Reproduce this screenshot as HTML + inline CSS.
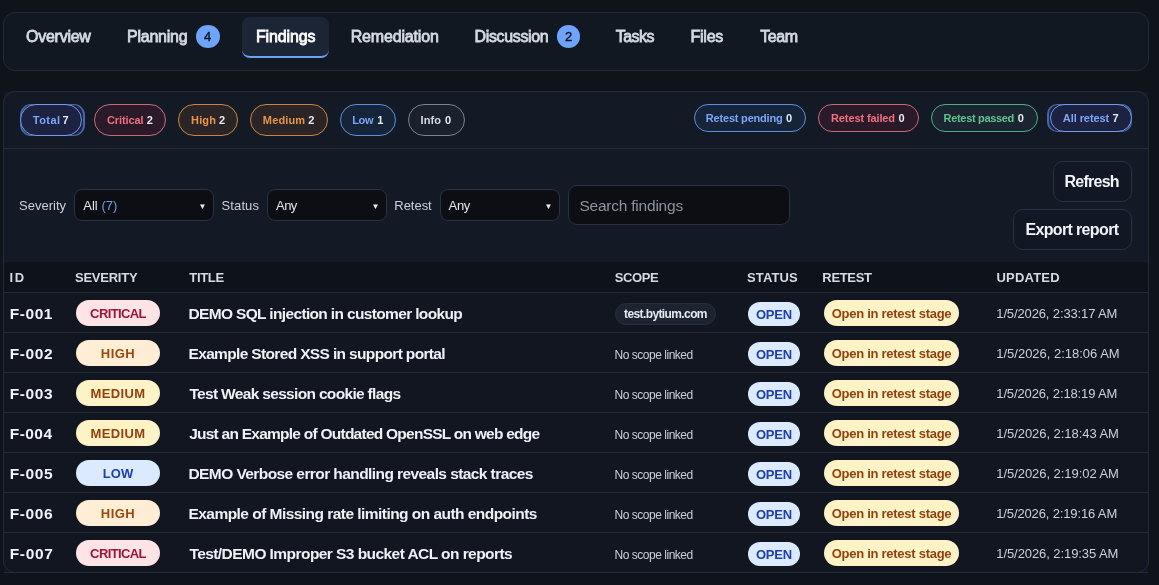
<!DOCTYPE html>
<html lang="en">
<head>
<meta charset="utf-8">
<title>Findings</title>
<style>
*{box-sizing:border-box;margin:0;padding:0}
html,body{width:1159px;height:585px;overflow:hidden}
body{background:#0f141b;color:#e6ebf2;font-family:"Liberation Sans",sans-serif;position:relative}
.tabs,.panel{will-change:transform}
.tabs{position:absolute;left:3px;top:12px;width:1146px;height:59px;background:#111822;border:1px solid #222b38;border-radius:12px}
.tab{position:absolute;top:4px;height:41px;line-height:39px;font-size:16px;font-weight:400;color:#d3d9e2;white-space:nowrap;-webkit-text-stroke:.8px #d3d9e2}
.tabbg{position:absolute;left:238px;top:4px;width:87px;height:41px;background:#1c2536;border-bottom:2px solid #6ea0f5;border-radius:8px}
.tab.active{color:#fff;-webkit-text-stroke:.8px #fff}
.badge{position:absolute;top:12px;width:23px;height:22.6px;border-radius:50%;background:#6ea4fb;color:#0b1220;font-size:13px;font-weight:400;-webkit-text-stroke:.4px #0b1220;text-align:center;line-height:23px}
.panel{position:absolute;left:3px;top:91px;width:1146px;height:482px;background:#141a25;border:1px solid #222b38;border-radius:12px}
.panel::after{content:'';position:absolute;left:-1px;top:-1px;right:-1px;bottom:-1px;border:1px solid #222b38;border-radius:12px;z-index:5}
.chips{position:absolute;left:0;top:0;width:1144px;height:57px;border-bottom:1px solid #222b38;background:#141a25}
.chip{position:absolute;top:12px;height:32px;border-radius:16px;border:1px solid;font-size:11px;font-weight:700;white-space:nowrap;line-height:30px}
.chip.r{height:28px;line-height:26px;border-radius:14px}
.chip span{position:absolute;top:0}
.chip b{position:absolute;top:0;color:#e6ebf2;font-weight:700}
.c-blue{border-color:#5b8fd9;background:#16243a;color:#7aa7f7}
.c-sel{border-color:#6f9be8;background:#1d2242;color:#7aa7f7}
.ring{position:absolute;top:12px;border:solid #4467a6;border-width:1px 2px;background:#1d2242}
.c-red{border-color:#c96a78;background:#2a1a29;color:#f0707f}
.c-org{border-color:#c9853d;background:#2b2426;color:#e8954a}
.c-grn{border-color:#4caf7d;background:#1b2431;color:#5fc58f}
.c-gry{border-color:#7b8390;background:#1a202c;color:#d5dae3}
.filters{position:absolute;left:0;top:57px;width:1144px;height:113px}
.lbl{position:absolute;top:49px;font-size:13px;color:#c9d1dc;line-height:16px;white-space:nowrap}
.sel{position:absolute;top:40px;height:32px;border:1px solid #273242;border-radius:8px;background:#0c0e13;font-size:13px;color:#dfe4ec;line-height:32px;white-space:nowrap}
.sel span{position:absolute;left:8px;top:0}
.sel i{font-style:normal;color:#6f9be8}
.sel .arr{position:absolute;left:auto;right:6.5px;top:1px;font-size:8px;color:#e6ebf2;letter-spacing:0}
.search{position:absolute;left:564px;top:36px;width:222px;height:40px;border:1px solid #273242;border-radius:9px;background:#0c0e13;font-size:15.5px;color:#8b93a1;line-height:40px;white-space:nowrap}
.search span{position:absolute;left:11px;top:0}
.btn{position:absolute;height:40.5px;border:1px solid #283241;border-radius:10px;background:#121823;font-size:16px;font-weight:700;color:#f1f4f8;line-height:40px;white-space:nowrap}
.btn span{position:absolute;left:11px;top:0}
.thead{position:absolute;left:0;top:170px;width:1144px;height:31px;background:#0e121a;border-bottom:1px solid #242d3a}
.th{position:absolute;top:0;line-height:32px;font-size:13px;font-weight:700;color:#d5dae3;white-space:nowrap}
.row{position:absolute;left:0;width:1144px;height:40px;background:#111621;border-bottom:1px solid #242d3a}
.row>*{position:absolute;white-space:nowrap}
.id{left:6px;top:0;line-height:42px;font-size:15.5px;font-weight:700;color:#f1f4f8}
.ti{left:185px;top:0;line-height:42px;font-size:15.5px;font-weight:700;color:#eef1f6}
.up{left:993px;top:0;line-height:42px;font-size:13px;color:#c9d1dc}
.sev{left:72px;top:7px;width:84px;height:26px;border-radius:13px;font-size:13px;font-weight:700;text-align:center;line-height:28px}
.s-c{background:#ffe4e6;color:#9f1239}
.s-h{background:#ffedd5;color:#9a4a10}
.s-m{background:#fef3c7;color:#92400e}
.s-l{background:#dbeafe;color:#1e40af}
.scope{left:611px;top:10px;width:101px;height:22px;border-radius:11px;background:#1c2431;border:1px solid #262f3d;font-size:12px;font-weight:700;color:#e6ebf2;line-height:20px;text-align:center}
.nos{left:611px;top:0;line-height:45px;font-size:12px;color:#c9d1dc}
.open{left:744px;top:9px;width:52px;height:24px;border-radius:12px;background:#dbeafe;color:#1e40af;font-size:13px;font-weight:700;text-align:center;line-height:25px}
.rt{left:820px;top:7px;width:135px;height:26px;border-radius:13px;background:#fef3c7;color:#92400e;font-size:13px;font-weight:700;text-align:center;line-height:28px}
</style>
</head>
<body>
<div class="tabs">
<div class="tabbg"></div>
<div class="tab" id="t1" style="left:21.45px;letter-spacing:-0.25px;margin-left:0.52px">Overview</div>
<div class="tab" id="t2" style="left:123.20px;letter-spacing:-0.23px;margin-left:-0.20px">Planning</div>
<div class="tab active" id="t3" style="left:252.00px;letter-spacing:-0.13px;margin-left:-0.05px">Findings</div>
<div class="tab" id="t4" style="left:346.95px;letter-spacing:-0.17px;margin-left:-0.26px">Remediation</div>
<div class="tab" id="t5" style="left:470.70px;letter-spacing:-0.36px;margin-left:-0.14px">Discussion</div>
<div class="tab" id="t6" style="left:610.95px;letter-spacing:-0.51px;margin-left:0.74px">Tasks</div>
<div class="tab" id="t7" style="left:686.45px;letter-spacing:-0.23px;margin-left:0.03px">Files</div>
<div class="tab" id="t8" style="left:755.20px;letter-spacing:-0.39px;margin-left:0.94px">Team</div>
<div class="badge" style="left:191.7px;width:24px">4</div><div class="badge" style="left:553px">2</div>
</div>
<div class="panel">
<div class="chips">
<div class="ring" style="left:16px;width:65px;height:32px;border-radius:11px"></div><div class="ring" style="left:1043px;width:85px;height:28px;border-radius:10px"></div>
<div class="chip c-sel" style="left:16px;width:62px"><span id="c1" style="left:11.50px;letter-spacing:0.44px;margin-left:0.36px">Total</span><b style="left:41.50px">7</b></div>
<div class="chip c-red" style="left:90px;width:72px"><span id="c2" style="left:12.10px;letter-spacing:-0.08px;margin-left:-0.16px">Critical</span><b style="left:51.80px">2</b></div>
<div class="chip c-org" style="left:174px;width:60px"><span id="c3" style="left:12.10px;letter-spacing:0.12px;margin-left:-0.04px">High</span><b style="left:39.90px">2</b></div>
<div class="chip c-org" style="left:246px;width:78px"><span id="c4" style="left:12.00px;letter-spacing:0.14px;margin-left:-0.16px">Medium</span><b style="left:57.30px">2</b></div>
<div class="chip c-blue" style="left:336px;width:56px"><span id="c5" style="left:11.40px;letter-spacing:-0.35px;margin-left:-0.18px">Low</span><b style="left:36.30px">1</b></div>
<div class="chip c-gry" style="left:404px;width:57px"><span id="c6" style="left:11.70px;letter-spacing:0.11px;margin-left:-0.10px">Info</span><b style="left:36.00px">0</b></div>
<div class="chip c-blue r" style="left:690px;width:112px"><span id="c7" style="left:10.90px;letter-spacing:-0.20px;margin-left:-0.06px">Retest pending</span><b style="left:91.00px">0</b></div>
<div class="chip c-red r" style="left:814px;width:101px"><span id="c8" style="left:12.20px;letter-spacing:-0.11px;margin-left:-0.19px">Retest failed</span><b style="left:79.40px">0</b></div>
<div class="chip c-grn r" style="left:927px;width:107px"><span id="c9" style="left:11.70px;letter-spacing:-0.32px;margin-left:-0.12px">Retest passed</span><b style="left:85.80px">0</b></div>
<div class="chip c-sel r" style="left:1046px;width:82px"><span id="c10" style="left:11.70px;letter-spacing:-0.08px;margin-left:0.18px">All retest</span><b style="left:61.60px">7</b></div>
</div>
<div class="filters">
<div class="lbl" id="l1" style="left:15.20px;letter-spacing:0.01px;margin-left:-0.22px">Severity</div>
<div class="sel" style="left:70px;width:140px"><span id="s1" style="left:8.10px;letter-spacing:0.04px;margin-left:0.09px">All <i>(7)</i></span><span class="arr">&#9660;</span></div>
<div class="lbl" id="l2" style="left:217.60px;letter-spacing:0.10px">Status</div>
<div class="sel" style="left:263px;width:120px"><span id="s2" style="left:8.00px;letter-spacing:-0.62px;margin-left:0.12px">Any</span><span class="arr">&#9660;</span></div>
<div class="lbl" id="l3" style="left:390.10px;letter-spacing:-0.04px;margin-left:0.24px">Retest</div>
<div class="sel" style="left:436px;width:120px"><span id="s3" style="left:7.70px;letter-spacing:-0.36px;margin-left:-0.09px">Any</span><span class="arr">&#9660;</span></div>
<div class="search"><span id="q" style="left:10.90px;letter-spacing:-0.22px;margin-left:-0.51px">Search findings</span></div>
<div class="btn" style="left:1049px;top:12px;width:79px"><span id="b1" style="left:10.80px;letter-spacing:-0.72px;margin-left:-0.43px">Refresh</span></div>
<div class="btn" style="left:1009px;top:60.4px;width:119px"><span id="b2" style="left:12.00px;letter-spacing:-0.64px;margin-left:-0.62px">Export report</span></div>
</div>
<div class="thead">
<div class="th" id="h1" style="left:5.50px;letter-spacing:1.65px;margin-left:0.11px">ID</div>
<div class="th" id="h2" style="left:70.70px;letter-spacing:-0.24px;margin-left:0.29px">SEVERITY</div>
<div class="th" id="h3" style="left:184.50px;letter-spacing:-0.34px;margin-left:0.87px">TITLE</div>
<div class="th" id="h4" style="left:610.50px;letter-spacing:-0.42px;margin-left:0.26px">SCOPE</div>
<div class="th" id="h5" style="left:743.00px;letter-spacing:0.09px;margin-left:0.08px">STATUS</div>
<div class="th" id="h6" style="left:818.25px;letter-spacing:-0.34px;margin-left:0.08px">RETEST</div>
<div class="th" id="h7" style="left:992.25px;letter-spacing:0.23px;margin-left:0.17px">UPDATED</div>
</div>
<div class="row" style="top:201px">
<div class="id" id="id1" style="left:5.60px;letter-spacing:0.56px;margin-left:0.12px">F-001</div>
<div class="sev s-c" id="sv1" style="letter-spacing:-0.61px">CRITICAL</div>
<div class="ti" id="ti1" style="left:184.40px;letter-spacing:-0.65px;margin-left:0.09px">DEMO SQL injection in customer lookup</div>
<div class="scope" id="sc1" style="letter-spacing:-0.61px">test.bytium.com</div>
<div class="open" id="op1" style="letter-spacing:-0.18px">OPEN</div>
<div class="rt" id="rt1" style="letter-spacing:-0.27px">Open in retest stage</div>
<div class="up" id="up1" style="left:992.35px;letter-spacing:-0.13px;margin-left:-0.07px">1/5/2026, 2:33:17 AM</div>
</div>
<div class="row" style="top:241px">
<div class="id" id="id2" style="left:5.60px;letter-spacing:0.60px;margin-left:0.12px">F-002</div>
<div class="sev s-h" id="sv2" style="letter-spacing:0.50px">HIGH</div>
<div class="ti" id="ti2" style="left:184.40px;letter-spacing:-0.65px;margin-left:0.09px">Example Stored XSS in support portal</div>
<div class="nos" id="ns2" style="left:610.60px;letter-spacing:-0.48px;margin-left:-0.03px">No scope linked</div>
<div class="open" id="op2" style="letter-spacing:-0.18px">OPEN</div>
<div class="rt" id="rt2" style="letter-spacing:-0.27px">Open in retest stage</div>
<div class="up" id="up2" style="left:992.35px;letter-spacing:-0.01px;margin-left:-0.07px">1/5/2026, 2:18:06 AM</div>
</div>
<div class="row" style="top:281px">
<div class="id" id="id3" style="left:5.60px;letter-spacing:0.63px;margin-left:0.12px">F-003</div>
<div class="sev s-m" id="sv3" style="letter-spacing:0.38px">MEDIUM</div>
<div class="ti" id="ti3" style="left:184.40px;letter-spacing:-0.67px;margin-left:1.01px">Test Weak session cookie flags</div>
<div class="nos" id="ns3" style="left:610.60px;letter-spacing:-0.48px;margin-left:-0.03px">No scope linked</div>
<div class="open" id="op3" style="letter-spacing:-0.18px">OPEN</div>
<div class="rt" id="rt3" style="letter-spacing:-0.27px">Open in retest stage</div>
<div class="up" id="up3" style="left:992.35px;letter-spacing:-0.13px;margin-left:-0.07px">1/5/2026, 2:18:19 AM</div>
</div>
<div class="row" style="top:321px">
<div class="id" id="id4" style="left:5.60px;letter-spacing:0.47px;margin-left:0.12px">F-004</div>
<div class="sev s-m" id="sv4" style="letter-spacing:0.38px">MEDIUM</div>
<div class="ti" id="ti4" style="left:184.40px;letter-spacing:-0.75px;margin-left:0.74px">Just an Example of Outdated OpenSSL on web edge</div>
<div class="nos" id="ns4" style="left:610.60px;letter-spacing:-0.48px;margin-left:-0.03px">No scope linked</div>
<div class="open" id="op4" style="letter-spacing:-0.18px">OPEN</div>
<div class="rt" id="rt4" style="letter-spacing:-0.27px">Open in retest stage</div>
<div class="up" id="up4" style="left:992.35px;letter-spacing:-0.05px;margin-left:-0.07px">1/5/2026, 2:18:43 AM</div>
</div>
<div class="row" style="top:361px">
<div class="id" id="id5" style="left:5.60px;letter-spacing:0.59px;margin-left:0.12px">F-005</div>
<div class="sev s-l" id="sv5" style="letter-spacing:-0.01px">LOW</div>
<div class="ti" id="ti5" style="left:184.40px;letter-spacing:-0.58px;margin-left:0.09px">DEMO Verbose error handling reveals stack traces</div>
<div class="nos" id="ns5" style="left:610.60px;letter-spacing:-0.48px;margin-left:-0.03px">No scope linked</div>
<div class="open" id="op5" style="letter-spacing:-0.18px">OPEN</div>
<div class="rt" id="rt5" style="letter-spacing:-0.27px">Open in retest stage</div>
<div class="up" id="up5" style="left:992.35px;letter-spacing:-0.05px;margin-left:-0.07px">1/5/2026, 2:19:02 AM</div>
</div>
<div class="row" style="top:401px">
<div class="id" id="id6" style="left:5.60px;letter-spacing:0.60px;margin-left:0.12px">F-006</div>
<div class="sev s-h" id="sv6" style="letter-spacing:0.50px">HIGH</div>
<div class="ti" id="ti6" style="left:184.40px;letter-spacing:-0.54px;margin-left:0.09px">Example of Missing rate limiting on auth endpoints</div>
<div class="nos" id="ns6" style="left:610.60px;letter-spacing:-0.48px;margin-left:-0.03px">No scope linked</div>
<div class="open" id="op6" style="letter-spacing:-0.18px">OPEN</div>
<div class="rt" id="rt6" style="letter-spacing:-0.27px">Open in retest stage</div>
<div class="up" id="up6" style="left:992.35px;letter-spacing:-0.14px;margin-left:-0.07px">1/5/2026, 2:19:16 AM</div>
</div>
<div class="row" style="top:441px">
<div class="id" id="id7" style="left:5.60px;letter-spacing:0.65px;margin-left:0.12px">F-007</div>
<div class="sev s-c" id="sv7" style="letter-spacing:-0.61px">CRITICAL</div>
<div class="ti" id="ti7" style="left:184.40px;letter-spacing:-0.56px;margin-left:1.01px">Test/DEMO Improper S3 bucket ACL on reports</div>
<div class="nos" id="ns7" style="left:610.60px;letter-spacing:-0.48px;margin-left:-0.03px">No scope linked</div>
<div class="open" id="op7" style="letter-spacing:-0.18px">OPEN</div>
<div class="rt" id="rt7" style="letter-spacing:-0.27px">Open in retest stage</div>
<div class="up" id="up7" style="left:992.35px;letter-spacing:-0.08px;margin-left:-0.07px">1/5/2026, 2:19:35 AM</div>
</div>
</div>
</body>
</html>
